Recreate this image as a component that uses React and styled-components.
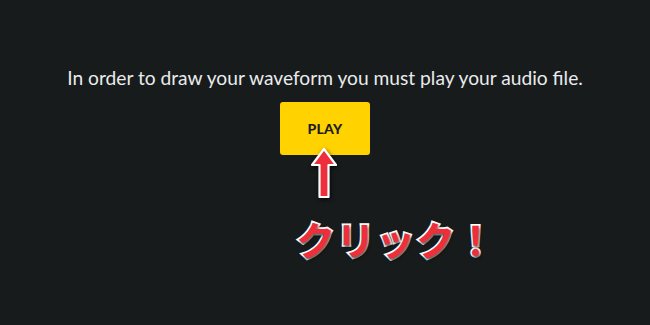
import React from "react";
import styled, { createGlobalStyle } from "styled-components";

const Global = createGlobalStyle`
  html, body { margin: 0; padding: 0; background: #181b1c; }
  #root { width: 650px; height: 325px; }
`;

const Page = styled.div`
  position: relative;
  width: 650px;
  height: 325px;
  background: #181b1c;
  display: flex;
  flex-direction: column;
  align-items: center;
  padding-top: 66px;
  box-sizing: border-box;
  font-family: "Lato", "Liberation Sans", sans-serif;
`;

const Message = styled.p`
  margin: 0;
  color: #e9ebec;
  font-size: 19.2px;
  line-height: 24px;
  white-space: nowrap;
`;

const PlayButton = styled.button`
  margin-top: 12px;
  width: 90px;
  height: 53px;
  border: none;
  border-radius: 3px;
  background: #ffd200;
  color: #1c1d1e;
  font-family: "Lato", "Liberation Sans", sans-serif;
  font-weight: 900;
  font-size: 14px;
  letter-spacing: 0.3px;
  cursor: pointer;
`;

const Annotation = styled.div`
  position: absolute;
  left: ${(p) => p.$x}px;
  top: ${(p) => p.$y}px;
`;

const Callout = styled.span`
  font-family: "Noto Sans CJK JP", sans-serif;
  font-weight: 700;
  font-size: 39px;
  line-height: 1;
  color: #ee2e3a;
  -webkit-text-stroke: 3.5px #ffffff;
  paint-order: stroke fill;
  letter-spacing: 1px;
  text-shadow: 1px 2px 3px rgba(0, 0, 0, 0.7);
  white-space: nowrap;
`;

const ArrowSvg = styled.svg`
  display: block;
  overflow: visible;
  filter: drop-shadow(1px 2px 2px rgba(0, 0, 0, 0.7));
`;

export default function App() {
  return (
    <>
      <Global />
      <Page>
        <Message>In order to draw your waveform you must play your audio file.</Message>
        <PlayButton>PLAY</PlayButton>
        <Annotation $x={310} $y={147}>
          <ArrowSvg width="28" height="52" viewBox="0 0 28 52">
            <path
              d="M14 2 L26 18 L18.5 18 L18.5 50 L9.5 50 L9.5 18 L2 18 Z"
              fill="#ee2e3a"
              stroke="#ffffff"
              strokeWidth="2.2"
              strokeLinejoin="round"
            />
          </ArrowSvg>
        </Annotation>
        <Annotation $x={296} $y={219}>
          <Callout>クリック！</Callout>
        </Annotation>
      </Page>
    </>
  );
}
